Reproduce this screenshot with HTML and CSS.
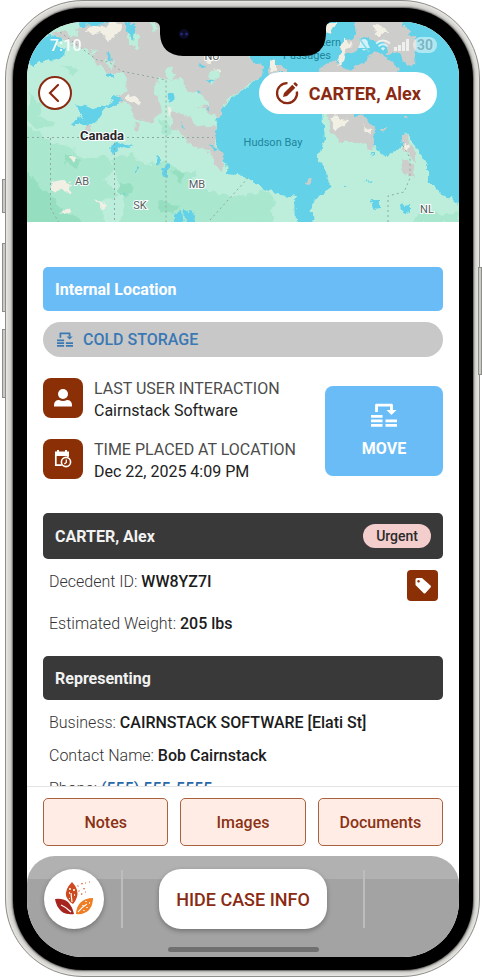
FILE: index.html
```
<!DOCTYPE html>
<html lang="en">

<head>
    <meta charset="UTF-8">
    <meta name="viewport" content="width=device-width, initial-scale=1.0">
    <link rel="stylesheet" href="styles.css">
    <title>Case Info</title>
</head>

<body>

    <!-- shared icon for location / move -->
    <svg width="0" height="0" class="defs" aria-hidden="true">
        <symbol id="icon-move" viewBox="0 0 26 24">
            <path d="M5.500 9V2.200h15V7" fill="none" stroke="currentColor" stroke-width="2.800" stroke-linejoin="round" />
            <path d="M15.500 7h10l-5 5z" fill="currentColor" />
            <path d="M0 12h11.500v2.800H0zM0 16.500h11.500v2.800H0zM0 21h11.500v2.800H0zM14.500 16.500H26v2.800H14.500zM14.500 21H26v2.800H14.500z" fill="currentColor" />
        </symbol>
    </svg>

    <div class="phone">
        <span class="side-button silent"></span>
        <span class="side-button volume-up"></span>
        <span class="side-button volume-down"></span>
        <span class="side-button power"></span>

        <div class="bezel">
            <div class="screen">

                <svg class="notch" viewBox="0 0 176 34" aria-hidden="true">
                    <path d="M0 0h176q-5 1-5 6v6q-1 22-23 22H28Q6 33 5 12V6q0-5-5-6z" fill="#000" />
                    <circle cx="29" cy="12" r="5" fill="#0b0b22" />
                    <circle cx="26.500" cy="12" r="1.500" fill="#24247a" />
                    <circle cx="31.500" cy="12" r="1.500" fill="#24247a" />
                </svg>

                <div class="map">
                    <svg class="map-canvas" viewBox="27 22 432 200" preserveAspectRatio="xMidYMid slice" role="img" aria-label="Map of Canada">
                        <defs>
                            <filter id="rough" x="-5%" y="-5%" width="110%" height="110%">
                                <feTurbulence type="fractalNoise" baseFrequency="0.12" numOctaves="3" seed="4" />
                                <feDisplacementMap in="SourceGraphic" scale="9" xChannelSelector="R" yChannelSelector="G" />
                            </filter>
                        </defs>
                        <rect x="27" y="22" width="432" height="200" fill="#bceedb" />
                        <g filter="url(#rough)">
                            <!-- forest -->
                            <g fill="#a9e7ce">
                                <path d="M20 125l18 6 14 12 20 4 12 12 22-4 10 14-12 10 14 16-18 6 8 30H20z" />
                                <path d="M112 158l20-4 14 12 18-4 20 10 12-2-4 16 20 6 30 6 22-8 12 12-16 28H118l6-24z" />
                                <path d="M30 95l12 8-4 12 16 10-14 4-14-6zM60 64l20 6-8 6zM160 120l16 8-10 10zM228 200l22-2 20 12 6 16h-50z" />
                            </g>
                            <g fill="#95dfc0">
                                <path d="M20 172l12 4 10 14 12 6 6 14 20 8 10 10H20z" />
                                <path d="M66 152l14 8-4 10-12-6zM120 182l14 6-6 10-10-6zM172 170l14 4-6 10zM160 200l20 6-8 8-14-4z" />
                            </g>
                            <!-- bare land -->
                            <g fill="#cdcecb">
                                <path d="M78 26l40-8 124 0 2 70-18 12-6 18-12-4-18-14-6-20-26-2-2 14 6 18-12 12-14-2-6-14-12-6 10-12-4-16-16 2-12-14-10-10-14-4z" />
                                <path d="M170 112l20 4 8 12 18-2-2 16 10 16-2 12-8-6-6-14-16-4-12-14-10-6z" />
                                <path d="M86 125l6 0 1 6-6 0zM134 124l5 1-2 6-4-2zM52 34l14-4 12 10-10 2zM62 99l4 0-1 4z" />
                            </g>
                            <g fill="#bceedb">
                                <path d="M128 26l10 8 0 16-10-6zM150 22l8 4-4 8zM164 70l8-2 4 8-8 4zM208 74l8-4 4 6-8 8zM178 90l24 4 8 12-22 2-14-8zM104 60l10 2-2 8zM90 48l8 4-4 4z" />
                            </g>
                            <g fill="#f2efe5">
                                <path d="M86 34l14-2 8 10 10-8 2-10-8-4-6 8-12-4zM126 92l14 8-2 6-12-6zM50 184l12-4 10 4-2 8-18-2zM206 60l10-4-4 8zM70 158l6-2-2 8zM94 200l14 4-4 5zM60 215l10-8 4 5zM214 68l8 3-3 2zM167 108l3 2-2 8z" />
                            </g>
                            <!-- lakes -->
                            <g fill="#63d2e8">
                                <path d="M30 44l20-10 10 4-6 10 12 0-4 10-10 4-8-2-10 8-8-6z" />
                                <path d="M78 18l34 0-4 6-28 2zM124 20l8 0 4 12-2 10-6-8zM76 104l14 5 14-3 12-9 7 2-18 10-8 13-10 3-14 0-2-3 12-4zM110 150l8-8 14 2-12 4-8 6z" />
                                <path d="M168 93l5-2 2 8-5 4zM158 156l4 2-2 8-4-2zM162 168l6-4 0 12-5 2zM174 214l8-2 2 12h-10zM184 210l10 2 2 12h-10zM106 73l8 2-2 5-6-2zM107 52l6 6-4 2zM204 79l12 1-6 3zM205 106l6 2-2 4zM180 122l5 6-3 1zM198 64l8 3-5 2zM210 145l8 4-4 3zM136 166l3 2-3 3zM122 192l5 0-3 4zM197 90l4 2-3 2z" />
                            </g>
                            <!-- Hudson Bay and the eastern sea -->
                            <path d="M252 84l-16 10-10 10-8 14-4 20 8 18 6 18 14 2 14 8 16 9 24 3 1 32h170V15H264l-14 38 0 10 12 2-4 14z" fill="#63d2e8" />
                            <g fill="#cdcecb">
                                <path d="M236 54l12 2 15 10-2 10-12 8-12 4zM269 66l12 0 10 8-20 0zM322 66l14-4 14 8 16-10 8-8 14 4 10 12-2 12-70 0-10-2z" />
                                <path d="M354 18l46 0 6 12 10 6 0 10-2 18-8 2-6-14-12 2-6-12-18-4-8 14-18 6 4-14 14-8z" />
                                <path d="M309 178l4 0-3 8-4-1zM402 116l5 0-1 3zM382 129l4 0-2 4z" />
                            </g>
                            <path d="M323 112l20 2 22 4 8 10 0 18 14 12 14-12 4-14 10 14 12 20 0 14 14 14 12 6 10 8v20H313l-2-26 14-8 4-10-4-16-8-10 8-18z" fill="#bceedb" />
                            <path d="M325 112l22 0 18 6 10 10-2 22-14-8-20 0-8-8zM402 134l4 0 10 20 0 8-14-14zM402 160l10 4 2 14-10-6z" fill="#cdcecb" />
                            <path d="M325 22l12 0-6 10-8-2zM344 40l6 2-6 18-8 6zM370 24l14 4 4 6-12 0zM328 117l22 2-4 8-10 2zM362 124l10 6-4 4zM270 60l6 2 0 10-6-4zM404 142l6 2-4 8z" fill="#f2efe5" />
                            <path d="M372 200l8 0 0 6-6 4-4-4zM400 206l10-2 0 8-6-2zM366 180l6 2-4 1zM342 184l4 1-2 2zM370 152l4 0-2 5z" fill="#63d2e8" />
                            <path d="M418 214l12-4 12 6 16-4v12h-46zM240 202l20 6 6 16h-26z" fill="#a9e7ce" />
                        </g>
                        <g class="borders">
                            <path d="M60 32l37 28 12 2 12 9 45 9v142M27 137.500h186M50.500 138v70l8 14M114.500 138v84M210 220l38-42M388 222v-26l16-4 6-14 0-20-8-14" />
                        </g>
                        <g class="region">
                            <text x="212" y="60">NU</text>
                            <text x="82" y="185">AB</text>
                            <text x="140" y="209">SK</text>
                            <text x="197" y="188">MB</text>
                            <text x="427" y="213">NL</text>
                        </g>
                        <g class="water-label">
                            <text x="341" y="46" text-anchor="end">Northwestern</text>
                            <text x="307" y="59" text-anchor="middle">Passages</text>
                            <text x="273" y="146" text-anchor="middle">Hudson Bay</text>
                        </g>
                        <text class="country" x="102" y="140">Canada</text>
                    </svg>

                    <div class="map-overlay">
                        <div class="status-bar">
                            <span class="clock">7:10</span>
                            <span class="status-icons">
                                <svg width="16" height="16" viewBox="0 0 16 16"><path d="M8 2q4 0 4 5l2 4H2l2-4q0-5 4-5zM6 12h4q-2 3-4 0z" fill="#fff" /><path d="M3 1l10 14" stroke="#8fdfee" stroke-width="1.500" /></svg>
                                <svg width="16" height="12" viewBox="0 0 16 12"><path d="M1 4.500q7-6 14 0M3.500 7.300q4.500-4 9 0" fill="none" stroke="#fff" stroke-width="1.800" /><path d="M5.800 9.200q2.200-1.800 4.400 0L8 11.800z" fill="#fff" /></svg>
                                <svg width="16" height="12" viewBox="0 0 16 12"><path d="M0 8h3v4H0zM4 6h3v6H4zM8 3h3v9H8zM12 0h3v12h-3z" fill="#fff" /></svg>
                                <span class="battery">30</span>
                            </span>
                        </div>
                        <div class="nav-row">
                            <button class="back" aria-label="Back">
                                <svg width="12" height="20" viewBox="0 0 12 20"><path d="M10 2L2 10l8 8" fill="none" stroke="currentColor" stroke-width="2.200" stroke-linecap="round" /></svg>
                            </button>
                            <button class="case-name">
                                <svg width="24" height="24" viewBox="0 0 24 24">
                                    <path d="M12.500 2.200A10 10 0 1 0 21.900 10.500" fill="none" stroke="currentColor" stroke-width="2.300" />
                                    <path d="M8 16l1-4 8.300-8.300 3 3L12 15zM18.300 2.700l1.200-1.200q.8-.5 1.500.2l1.500 1.500q.6.700 0 1.400l-1.200 1.100z" fill="currentColor" />
                                </svg>
                                CARTER, Alex
                            </button>
                        </div>
                    </div>
                </div>

                <main class="content">
                    <h2 class="bar bar-blue">Internal Location</h2>
                    <div class="location">
                        <svg width="16" height="15"><use href="#icon-move" /></svg>
                        COLD STORAGE
                    </div>

                    <section class="placement">
                        <div class="facts">
                            <div class="fact">
                                <span class="tile">
                                    <svg width="20" height="20" viewBox="0 0 20 20"><circle cx="10" cy="6" r="5" fill="#fff" /><path d="M1 18.500v-1Q1 12 6 12q4 2 8 0 5 0 5 5.500v1z" fill="#fff" /></svg>
                                </span>
                                <p><span class="label">LAST USER INTERACTION</span><br>Cairnstack Software</p>
                            </div>
                            <div class="fact">
                                <span class="tile">
                                    <svg width="18" height="20" viewBox="0 0 18 20">
                                        <path d="M1.800 4v12.200h6M14 4v4" fill="none" stroke="#fff" stroke-width="1.700" />
                                        <path d="M1 2.500h2V1h2v1.500h6V1h2v1.500h2V7H1z" fill="#fff" />
                                        <circle cx="12" cy="13" r="4.600" fill="none" stroke="#fff" stroke-width="1.600" />
                                        <path d="M12.300 10.500v3l-2 1.500" fill="none" stroke="#fff" stroke-width="1.300" />
                                    </svg>
                                </span>
                                <p><span class="label">TIME PLACED AT LOCATION</span><br>Dec 22, 2025 4:09 PM</p>
                            </div>
                        </div>
                        <button class="move">
                            <svg width="26" height="24"><use href="#icon-move" /></svg>
                            MOVE
                        </button>
                    </section>

                    <h2 class="bar bar-dark bar-case">CARTER, Alex <span class="badge">Urgent</span></h2>
                    <div class="details">
                        <div class="detail-row">
                            <p>Decedent ID: <b>WW8YZ7I</b></p>
                            <button class="tag" aria-label="Tag">
                                <svg width="18" height="18" viewBox="0 0 18 18"><path fill-rule="evenodd" d="M1.500 2.500Q1.500 1 3 1h5l8.500 7.500q1 1 0 2L11.500 16q-1 1-2 0L1.500 8zM4.500 3a1.300 1.300 0 1 0 .1 0z" fill="#fff" /></svg>
                            </button>
                        </div>
                        <p>Estimated Weight: <b>205 lbs</b></p>
                    </div>

                    <h2 class="bar bar-dark">Representing</h2>
                    <div class="contact">
                        <p>Business: <b>CAIRNSTACK SOFTWARE [Elati St]</b></p>
                        <p>Contact Name: <b>Bob Cairnstack</b></p>
                        <p>Phone: <a href="tel:5555555555">(555) 555-5555</a></p>
                    </div>
                </main>

                <div class="actions">
                    <button>Notes</button>
                    <button>Images</button>
                    <button>Documents</button>
                </div>

                <footer class="dock">
                    <div class="dock-row">
                        <div class="dock-side">
                            <button class="logo" aria-label="Home">
                                <svg width="40" height="36" viewBox="0 0 40 36">
                                    <path d="M18 1q-7 7-6 14 2 5 7 8 6-7 4-14-1-4-5-8z" fill="#cf4a20" />
                                    <path d="M1 18q9-1 14 4 4 5 5 11-8 1-13-3-5-5-6-12z" fill="#a6241d" />
                                    <path d="M39 17q-8 0-13 5-4 5-4 11 8 1 13-4 4-5 4-12z" fill="#ee7d23" />
                                    <path d="M18 21l-1-9M17 31q-5-5-10-7M24 31q4-5 9-8" fill="none" stroke="#fff" stroke-width="1.200" />
                                    <path d="M15 7h2v2h-2zM19 8h2v2h-2zM15 11h1v2h-1zM20 13h1v2h-1zM15 17h1v1h-1zM31 20h2v1h-2zM35 21h1v2h-1zM28 24h2v1h-2zM32 26h2v1h-2zM29 29h2v1h-2z" fill="#fbd9c2" />
                                    <path d="M23 4l2 1-1 1zM27 2l2 0-1 2zM31 1l1 1-1 1zM35 0l1 1-1 1zM25 9l1 1-2 1zM29 7l2 0-1 2zM27 12l2 1-2 1zM31 10l1 1-1 1z" fill="#e0663a" />
                                </svg>
                            </button>
                            <span class="divider"></span>
                        </div>
                        <button class="hide-info">HIDE CASE INFO</button>
                        <div class="dock-side">
                            <span class="divider"></span>
                        </div>
                    </div>
                    <span class="home-indicator"></span>
                </footer>

            </div>
        </div>
    </div>

</body>

</html>
```
FILE: styles.css
```
* {
    box-sizing: border-box;
}

body {
    margin: 0;
    background-color: white;
    font-family: Roboto, "Liberation Sans", sans-serif;
    font-size: 16px;
    color: #222;
}

button {
    font-family: inherit;
    border: none;
    padding: 0;
    cursor: pointer;
}

h2,
p {
    margin: 0;
}

b {
    font-weight: 500;
    color: #1c1c1c;
}

.defs {
    position: absolute;
}

/* phone frame */
.phone {
    position: relative;
    height: 100vh;
    min-height: 760px;
    margin: 0 2px 0 5px;
    padding: 7px 6px 6px 7px;
    border: 1px solid #8d8d8a;
    border-radius: 78px;
    background-color: #d6d5d1;
    box-shadow: inset 0 0 3px 1px #efefec;
}

.side-button {
    position: absolute;
    left: -4px;
    width: 4px;
    border: 1px solid #8d8d8a;
    background-color: #c9c9c5;
}

.silent {
    top: 178px;
    height: 34px;
}

.volume-up {
    top: 242px;
    height: 69px;
}

.volume-down {
    top: 328px;
    height: 69px;
}

.power {
    left: auto;
    right: -3px;
    top: 266px;
    height: 108px;
}

.bezel {
    height: 100%;
    padding: 14px 14px 13px;
    border-radius: 70px;
    background-color: black;
    box-shadow: 0 0 2px 1px #555;
}

.screen {
    position: relative;
    display: flex;
    flex-direction: column;
    height: 100%;
    overflow: hidden;
    border-radius: 56px;
    background-color: white;
}

.notch {
    position: absolute;
    top: 0;
    left: 50%;
    z-index: 1;
    width: 176px;
    margin-left: -88px;
}

/* map header */
.map {
    display: grid;
    flex: none;
    height: 200px;
}

.map-canvas,
.map-overlay {
    grid-area: 1 / 1;
    width: 100%;
    height: 200px;
    min-width: 0;
}

.map-overlay {
    position: relative;
    padding: 12px 22px 0 11px;
}

.borders path {
    fill: none;
    stroke: #8fa9a0;
    stroke-width: 1;
    stroke-dasharray: 2 3;
}

.region {
    font-size: 11px;
    fill: #53605f;
    text-anchor: middle;
    stroke: white;
    stroke-width: 2px;
    paint-order: stroke;
}

.water-label {
    font-size: 11px;
    fill: #20849b;
}

.country {
    font-size: 13px;
    font-weight: 700;
    fill: #26282c;
    text-anchor: middle;
    stroke: white;
    stroke-width: 2px;
    paint-order: stroke;
}

.status-bar {
    display: flex;
    justify-content: space-between;
    align-items: center;
    height: 22px;
    padding-left: 12px;
    color: white;
}

.clock {
    font-size: 16px;
    font-weight: 500;
    opacity: 0.9;
}

.status-icons {
    display: flex;
    align-items: center;
    gap: 3px;
    opacity: 0.7;
}

.battery {
    width: 24px;
    border-radius: 8px;
    background-color: rgba(255, 255, 255, 0.7);
    color: #8ba9b0;
    font-size: 14px;
    font-weight: 700;
    line-height: 16px;
    text-align: center;
}

.nav-row {
    display: flex;
    justify-content: space-between;
    align-items: center;
    margin-top: 16px;
}

.back {
    display: flex;
    align-items: center;
    justify-content: center;
    width: 34px;
    height: 34px;
    padding-right: 2px;
    border: 2px solid #8b2a12;
    border-radius: 50%;
    background-color: white;
    color: #8b2a12;
}

.case-name {
    display: flex;
    align-items: center;
    gap: 10px;
    height: 42px;
    padding: 0 16px;
    border-radius: 21px;
    background-color: white;
    color: #8b2a12;
    font-size: 18px;
    font-weight: 700;
}

.content {
    flex: 1;
    min-height: 0;
    overflow: hidden;
    padding: 45px 16px 0;
}

.bar {
    display: flex;
    align-items: center;
    justify-content: space-between;
    height: 44px;
    padding: 0 12px;
    border-radius: 5px;
    color: white;
    font-size: 16px;
    font-weight: 700;
}

.bar-blue {
    background-color: #6abcf7;
}

.bar-dark {
    background-color: #393939;
    color: #f2f2f2;
}

.bar-case {
    height: 46px;
}

.location {
    display: flex;
    align-items: center;
    gap: 10px;
    height: 35px;
    margin-top: 11px;
    padding: 0 14px;
    border-radius: 18px;
    background-color: #c8c8c8;
    color: #3a78b4;
    font-weight: 500;
}

.placement {
    display: flex;
    align-items: center;
    justify-content: space-between;
    margin: 21px 0 30px;
}

.facts {
    display: grid;
    gap: 17px;
}

.fact {
    display: flex;
    align-items: flex-start;
    gap: 11px;
    line-height: 22px;
    white-space: nowrap;
}

.label {
    color: #4c4c4c;
}

.tile {
    display: flex;
    flex: none;
    align-items: center;
    justify-content: center;
    width: 40px;
    height: 40px;
    border-radius: 8px;
    background-color: #8a2f06;
}

.move {
    display: flex;
    flex-direction: column;
    align-items: center;
    justify-content: center;
    gap: 12px;
    width: 118px;
    height: 90px;
    border-radius: 8px;
    background-color: #6abcf7;
    color: white;
    font-size: 16px;
    font-weight: 700;
}

.badge {
    padding: 0 13px;
    border-radius: 12px;
    background-color: #f4cdcd;
    color: #2b2b2b;
    font-size: 14px;
    font-weight: 500;
    line-height: 24px;
}

.details {
    padding: 11px 5px 20px 6px;
}

.detail-row {
    display: flex;
    justify-content: space-between;
    height: 42px;
}

.details p,
.contact p {
    color: #333;
    font-weight: 300;
    line-height: 24px;
}

.details b,
.contact b {
    font-weight: 500;
}

.tag {
    display: flex;
    align-items: center;
    justify-content: center;
    width: 31px;
    height: 31px;
    border-radius: 4px;
    background-color: #8a2f06;
}

.contact {
    display: grid;
    gap: 9px;
    padding: 11px 6px;
}

.contact a {
    color: #2868a8;
    font-weight: 500;
}

/* bottom buttons */
.actions {
    display: grid;
    flex: none;
    grid-template-columns: repeat(3, 1fr);
    gap: 12px;
    padding: 11px 16px 10px;
    border-top: 1px solid #e4e4e4;
}

.actions button {
    height: 48px;
    border: 1px solid #a9623f;
    border-radius: 5px;
    background-color: #ffede5;
    color: #8b3216;
    font-size: 16px;
    font-weight: 500;
}

.dock {
    flex: none;
    padding: 13px 17px 5px;
    border-radius: 28px 28px 0 0;
    background: linear-gradient(#b1b1b1 23px, #a3a3a3 23px);
}

.dock-row {
    display: grid;
    grid-template-columns: 1fr auto 1fr;
    align-items: center;
    gap: 36px;
}

.dock-side {
    display: flex;
    align-items: center;
    justify-content: space-between;
}

.logo {
    display: flex;
    align-items: center;
    justify-content: center;
    width: 60px;
    height: 60px;
    border-radius: 50%;
    background-color: white;
    box-shadow: 0 2px 5px rgba(0, 0, 0, 0.3);
}

.divider {
    width: 2px;
    height: 58px;
    background-color: #bdbdbd;
}

.hide-info {
    width: 168px;
    height: 60px;
    border-radius: 22px;
    background-color: white;
    box-shadow: 0 2px 5px rgba(0, 0, 0, 0.3);
    color: #8b2a12;
    font-size: 18px;
    font-weight: 500;
}

.home-indicator {
    display: block;
    width: 151px;
    height: 5px;
    margin: 18px auto 0;
    border-radius: 3px;
    background-color: #707070;
}
```
